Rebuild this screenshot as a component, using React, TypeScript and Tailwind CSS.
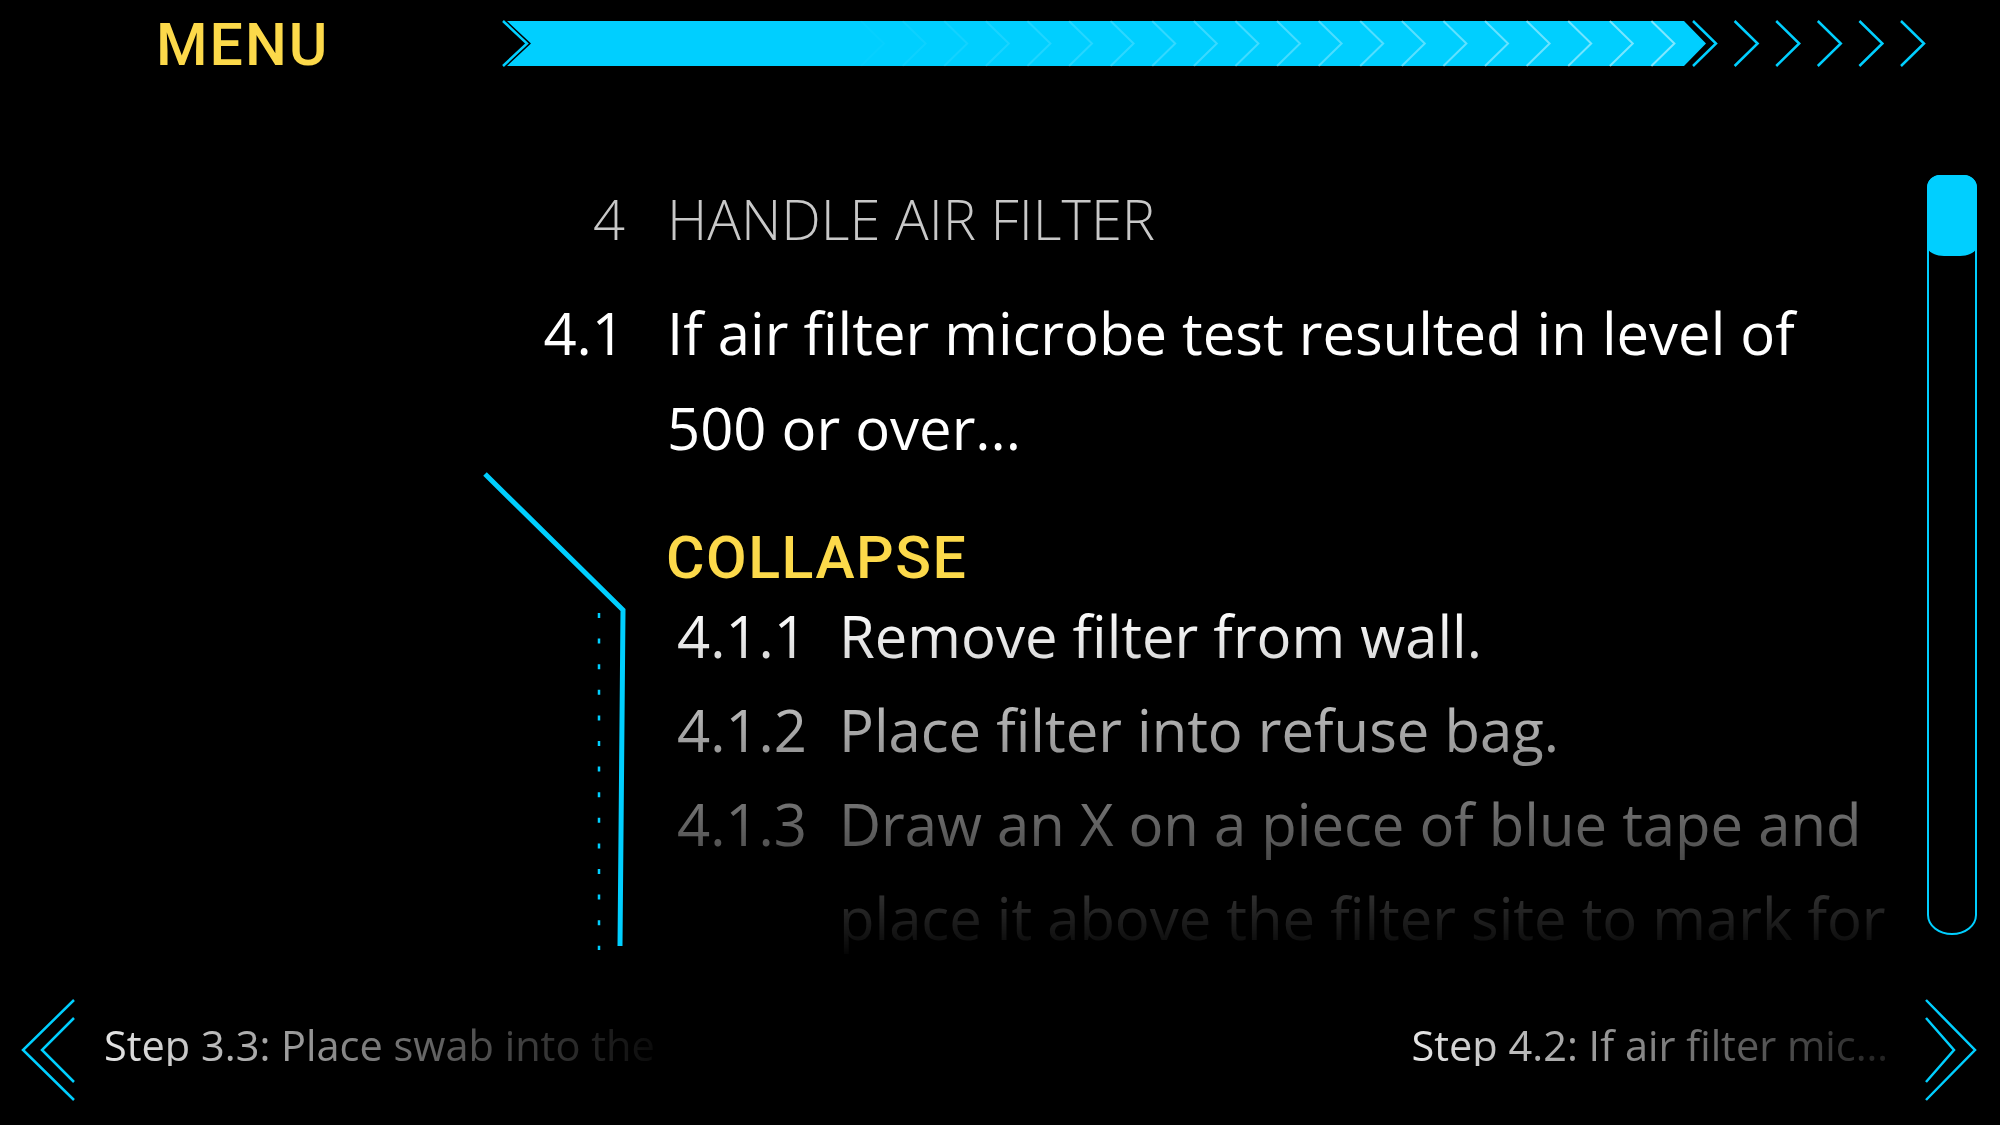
import React from "react";

function ProgressBar() {
  const inner: React.ReactNode[] = [];
  for (let n = 1; n <= 21; n++) {
    const x = 1213 - 41.6 * n;
    const op = Math.max(0, 0.5 * (1 - (n - 1) / 20));
    inner.push(
      <polyline
        key={"i" + n}
        points={`${x},1 ${x + 23},23.5 ${x},46`}
        fill="none"
        stroke="#ffffff"
        strokeOpacity={op}
        strokeWidth={2}
      />
    );
  }
  const outer: React.ReactNode[] = [];
  for (let n = 0; n <= 5; n++) {
    const x = 1213 + 41.6 * n;
    outer.push(
      <polyline
        key={"o" + n}
        points={`${x},1 ${x + 23},23.5 ${x},46`}
        fill="none"
        stroke="#00cfff"
        strokeWidth={2.5}
      />
    );
  }
  return (
    <svg width="1460" height="48" viewBox="0 0 1460 48" className="block shrink-0">
      <polyline points="23,1 47,23.5 23,46" fill="none" stroke="#00cfff" strokeWidth="2.5" />
      <polygon points="27,1 1204,1 1226,23.5 1204,46 27,46 51,23.5" fill="#00cfff" />
      {inner}
      {outer}
    </svg>
  );
}

function Decoration() {
  return (
    <svg
      width="700"
      height="885"
      viewBox="0 0 700 885"
      className="absolute left-0 top-0 pointer-events-none"
    >
      <polyline
        points="485,384 623,520 620,856"
        fill="none"
        stroke="#00cfff"
        strokeWidth="5"
        strokeLinejoin="miter"
      />
      <line x1="599" y1="523" x2="599" y2="860" stroke="#00cfff" strokeWidth="2.5" strokeDasharray="5 20.6" />
    </svg>
  );
}

const subItems: [string, string][] = [
  ["4.1.1", "Remove filter from wall."],
  ["4.1.2", "Place filter into refuse bag."],
  ["4.1.3", "Draw an X on a piece of blue tape and place it above the filter site to mark for"],
];

export default function App() {
  return (
    <div className="w-[2000px] h-[1125px] bg-black flex flex-col overflow-hidden font-['Open_Sans',sans-serif]">
      <header className="h-[90px] flex items-start shrink-0">
        <div className="w-[480px] shrink-0 pl-[156px] pt-[15px] font-['Roboto',sans-serif] font-medium text-[59px] leading-[59px] tracking-[2px] text-[#fcd94a]">
          MENU
        </div>
        <div className="pt-[20px]">
          <ProgressBar />
        </div>
      </header>

      <main className="relative flex h-[885px] shrink-0">
        <Decoration />
        <section className="flex-1 pl-[520px] pr-[10px] pt-[81px] flex flex-col">
          <div className="grid grid-cols-[105px_1fr] gap-x-[42px] text-[56px] leading-[94px] font-light text-[#c8c8c8]">
            <span className="text-right">4</span>
            <span>HANDLE AIR FILTER</span>
          </div>
          <div className="mt-[20px] grid grid-cols-[105px_1180px] gap-x-[42px] text-[58px] leading-[95px] text-white">
            <span className="text-right">4.1</span>
            <span>If air filter microbe test resulted in level of 500 or over...</span>
          </div>
          <div className="mt-[53px] pl-[146px] font-['Roboto',sans-serif] font-medium text-[59px] leading-[59px] tracking-[1.5px] text-[#fcd94a]">
            COLLAPSE
          </div>
          <div className="mt-[2px] h-[366px] overflow-hidden pl-[157px] [mask-image:linear-gradient(to_bottom,#000_20px,transparent_372px)] [-webkit-mask-image:linear-gradient(to_bottom,#000_20px,transparent_372px)]">
            <div className="grid grid-cols-[162px_1fr] text-[58px] leading-[94px] text-white">
              {subItems.map(([num, txt]) => (
                <React.Fragment key={num}>
                  <span>{num}</span>
                  <span>{txt}</span>
                </React.Fragment>
              ))}
            </div>
          </div>
        </section>
        <div className="shrink-0 mr-[23px] mt-[85px] w-[50px] h-[760px] border-2 border-[#00cfff] rounded-t-[13px] rounded-bl-[25px_20px] rounded-br-[25px_20px] flex flex-col">
          <div className="-mx-[2px] -mt-[2px] h-[81px] bg-[#00cfff] rounded-t-[13px] rounded-bl-[17px_10px] rounded-br-[17px_10px]" />
        </div>
      </main>

      <footer className="h-[150px] flex items-center shrink-0">
        <svg className="ml-[20px] shrink-0" width="60" height="104" viewBox="0 0 60 104">
          <polyline points="54,2 3,52 54,102" fill="none" stroke="#00cfff" strokeWidth="2.5" />
          <polyline points="54,20 22,52 54,84" fill="none" stroke="#00cfff" strokeWidth="2.5" />
        </svg>
        <div className="ml-[24px] -mt-[10px] w-[555px] whitespace-nowrap overflow-hidden text-[41.5px] leading-[42px] font-normal text-[#e6e6e6] [mask-image:linear-gradient(to_right,#000,rgba(0,0,0,0.04))] [-webkit-mask-image:linear-gradient(to_right,#000,rgba(0,0,0,0.04))]">
          Step 3.3: Place swab into the
        </div>
        <div className="flex-1" />
        <div className="-mt-[10px] whitespace-nowrap text-[41.5px] leading-[42px] font-normal text-[#e6e6e6] [mask-image:linear-gradient(to_right,#000,rgba(0,0,0,0.15))] [-webkit-mask-image:linear-gradient(to_right,#000,rgba(0,0,0,0.15))]">
          Step 4.2: If air filter mic…
        </div>
        <svg className="ml-[32px] mr-[20px] shrink-0" width="60" height="104" viewBox="0 0 60 104">
          <polyline points="6,2 55,52 6,102" fill="none" stroke="#00cfff" strokeWidth="2.5" />
          <polyline points="6,20 34,52 6,84" fill="none" stroke="#00cfff" strokeWidth="2.5" />
        </svg>
      </footer>
    </div>
  );
}
